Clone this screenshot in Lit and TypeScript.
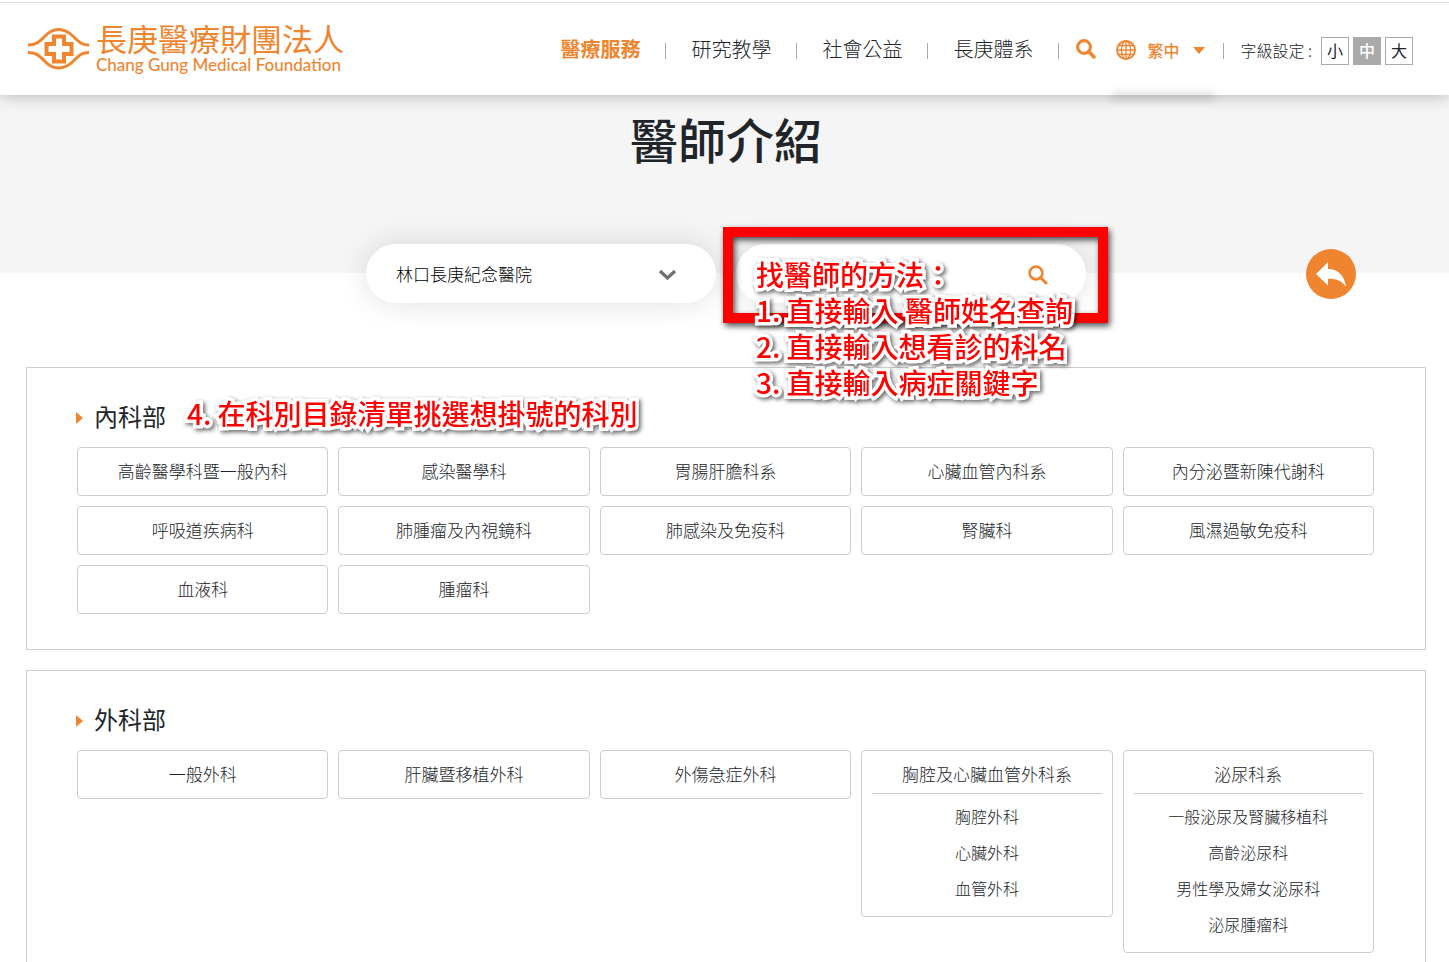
import { LitElement, html, css, svg } from "lit";
import { customElement, property, state } from "lit/decorators.js";
import { classMap } from "lit/directives/class-map.js";

interface Dept {
  name: string;
  children?: string[];
}

interface Division {
  title: string;
  depts: Dept[];
}

const NAV = ["醫療服務", "研究教學", "社會公益", "長庚體系"];
const SIZES = ["小", "中", "大"];

const DIVISIONS: Division[] = [
  {
    title: "內科部",
    depts: [
      { name: "高齡醫學科暨一般內科" },
      { name: "感染醫學科" },
      { name: "胃腸肝膽科系" },
      { name: "心臟血管內科系" },
      { name: "內分泌暨新陳代謝科" },
      { name: "呼吸道疾病科" },
      { name: "肺腫瘤及內視鏡科" },
      { name: "肺感染及免疫科" },
      { name: "腎臟科" },
      { name: "風濕過敏免疫科" },
      { name: "血液科" },
      { name: "腫瘤科" },
    ],
  },
  {
    title: "外科部",
    depts: [
      { name: "一般外科" },
      { name: "肝臟暨移植外科" },
      { name: "外傷急症外科" },
      { name: "胸腔及心臟血管外科系", children: ["胸腔外科", "心臟外科", "血管外科"] },
      {
        name: "泌尿科系",
        children: ["一般泌尿及腎臟移植科", "高齡泌尿科", "男性學及婦女泌尿科", "泌尿腫瘤科"],
      },
    ],
  },
];

const magnifier = (stroke: number) => svg`
  <circle cx="8" cy="8" r="6.4" fill="none" stroke="currentColor" stroke-width=${stroke}></circle>
  <path d="M12.6 12.6 L18 18" fill="none" stroke="currentColor" stroke-width=${stroke + 0.4} stroke-linecap="round"></path>`;

@customElement("site-header")
class SiteHeader extends LitElement {
  @state() private size = "中";

  static styles = css`
    :host {
      display: block;
      position: relative;
      z-index: 1;
      padding-top: 2px;
      background: #fff;
      box-shadow: 0 0 16px rgba(0, 0, 0, 0.3);
    }
    .bar {
      display: flex;
      align-items: center;
      justify-content: space-between;
      height: 93px;
      padding: 0 36px 0 28px;
      box-sizing: border-box;
      border-top: 1px solid #ddd;
    }
    a {
      color: inherit;
      text-decoration: none;
    }
    .logo {
      display: flex;
      align-items: center;
      gap: 6px;
      color: #f08530;
    }
    .mark {
      width: 62px;
      height: 42px;
    }
    .names {
      display: flex;
      flex-direction: column;
      gap: 2px;
    }
    .zh {
      font-size: 31px;
      line-height: 30px;
      font-weight: 400;
    }
    .en {
      font-family: Lato, sans-serif;
      font-size: 17px;
      line-height: 20px;
      font-weight: 500;
    }
    .tools {
      padding-top: 4px;
    }
    .tools,
    .nav,
    .sizes,
    .lang {
      display: flex;
      align-items: center;
    }
    .item {
      display: flex;
      align-items: center;
      font-size: 20px;
      line-height: 28px;
      font-weight: 300;
      color: #212529;
    }
    .item a {
      padding: 0 25px;
      margin-bottom: 4px;
    }
    .item.on {
      color: #f08530;
      font-weight: 700;
    }
    .item::after,
    .rule {
      content: "";
      width: 1px;
      height: 16px;
      background: #aaa;
    }
    button {
      font: inherit;
      color: #f08530;
      background: none;
      border: 0;
      padding: 0;
      cursor: pointer;
    }
    .find {
      margin: 0 20px 4px 17px;
      display: flex;
    }
    .lang {
      position: relative;
      gap: 11px;
      margin: 0 18px 2px 0;
      font-size: 16px;
      line-height: 24px;
      font-weight: 500;
    }
    .lang::after {
      content: "";
      position: absolute;
      left: 0;
      right: -6px;
      bottom: -34px;
      box-shadow: 0 0 8px 4px rgba(0, 0, 0, 0.12);
    }
    .caret {
      margin-left: 3px;
      border: 6px solid transparent;
      border-top: 7px solid #f08530;
      border-bottom: 0;
    }
    .sizes {
      gap: 4px;
      margin-left: 16px;
      font-size: 16px;
      line-height: 24px;
      font-weight: 300;
      color: #212529;
    }
    .label {
      margin: 0 5px 2px 0;
    }
    .size {
      width: 28px;
      height: 28px;
      padding-bottom: 2px;
      border: 1px solid #aaa;
      color: #212529;
      font-weight: 400;
    }
    .size.on {
      background: #aaa;
      color: #fff;
      font-weight: 500;
    }
  `;

  render() {
    return html`
      <header class="bar">
        <a class="logo" href="#">
          <svg class="mark" viewBox="0 0 62 42" aria-hidden="true">
            <g fill="none" stroke="#f08530" stroke-width="3">
              <path d="M0 17 C9 17 12 13 16 9 C25 -1 36 -1 46 9 C50 13 53 17 61 17"></path>
              <path d="M0 24.500 C9 24.500 12 28.500 16 32.500 C25 42.500 36 42.500 46 32.500 C50 28.500 53 24.500 61 24.500"></path>
            </g>
            <path
              fill="none"
              stroke="#f08530"
              stroke-width="4"
              d="M26 8.500 H36 V16 H43.500 V26 H36 V33.500 H26 V26 H18.500 V16 H26 Z"
            ></path>
          </svg>
          <span class="names">
            <span class="zh">長庚醫療財團法人</span>
            <span class="en">Chang Gung Medical Foundation</span>
          </span>
        </a>
        <div class="tools">
          <nav class="nav">
            ${NAV.map(
              (n, i) => html`<span class=${classMap({ item: true, on: i === 0 })}><a href="#">${n}</a></span>`
            )}
          </nav>
          <button class="find" aria-label="搜尋">
            <svg width="20" height="20" viewBox="0 0 20 20">${magnifier(3.1)}</svg>
          </button>
          <button class="lang">
            <svg width="20" height="20" viewBox="0 0 20 20" aria-hidden="true">
              <g fill="none" stroke="#f08530" stroke-width="1.300">
                <circle cx="10" cy="10" r="9" stroke-width="1.900"></circle>
                <ellipse cx="10" cy="10" rx="4.600" ry="9"></ellipse>
                <path d="M10 1 V19 M1 10 H19 M2.500 5.500 H17.500 M2.500 14.500 H17.500"></path>
              </g>
            </svg>
            繁中
            <span class="caret"></span>
          </button>
          <span class="rule"></span>
          <div class="sizes" role="group" aria-label="字級設定">
            <span class="label">字級設定 :</span>
            ${SIZES.map(
              (s) => html`<button
                class=${classMap({ size: true, on: s === this.size })}
                @click=${() => (this.size = s)}
              >
                ${s}
              </button>`
            )}
          </div>
        </div>
      </header>
    `;
  }
}

@customElement("dept-panel")
class DeptPanel extends LitElement {
  @property({ attribute: false }) division!: Division;

  static styles = css`
    :host {
      display: block;
      position: relative;
      padding: 33px 51px 35px 50px;
      border: 1px solid #ccc;
      color: #212529;
    }
    h2 {
      display: flex;
      align-items: center;
      gap: 11px;
      margin: 0 0 16px;
      font-size: 24px;
      line-height: 30px;
      font-weight: 400;
    }
    h2::before {
      content: "";
      margin: 4px 0 0 -1px;
      border: 6px solid transparent;
      border-left: 7px solid #f08530;
      border-right: 0;
    }
    .grid {
      display: grid;
      grid-template-columns: repeat(5, 1fr);
      align-items: start;
      gap: 10px;
    }
    .card {
      border: 1px solid #ccc;
      border-radius: 4px;
      text-align: center;
      font-weight: 300;
    }
    a {
      display: block;
      color: inherit;
      text-decoration: none;
    }
    .main {
      padding: 11px 0 13px;
      font-size: 17px;
      line-height: 23px;
    }
    .group {
      padding: 0 10px 10px;
    }
    .group .main {
      padding-bottom: 8px;
      margin-bottom: 4px;
      border-bottom: 1px solid #ccc;
    }
    .sub {
      font-size: 16px;
      line-height: 36px;
    }
  `;

  render() {
    return html`
      <h2>${this.division.title}</h2>
      <div class="grid">
        ${this.division.depts.map(
          (d) => html`<div class=${classMap({ card: true, group: !!d.children })}>
            <a class="main" href="#">${d.name}</a>
            ${d.children?.map((c) => html`<a class="sub" href="#">${c}</a>`)}
          </div>`
        )}
      </div>
      <slot></slot>
    `;
  }
}

@customElement("app-root")
class AppRoot extends LitElement {
  static styles = css`
    :host {
      display: block;
      height: 100vh;
      overflow: hidden;
      background: #fff;
      font-family: "Noto Sans CJK TC", "Noto Sans", sans-serif;
      color: #212529;
    }
    .hero {
      padding: 11px 0 103px;
      background: #f5f5f5;
      text-align: center;
    }
    h1 {
      margin: 0;
      padding-left: 3px;
      font-size: 48px;
      line-height: 64px;
      font-weight: 500;
    }
    main {
      padding: 0 23px 0 26px;
    }
    .controls {
      display: grid;
      grid-template-columns: 1fr auto 1fr;
      align-items: center;
      margin-top: -29px;
    }
    .pills {
      grid-column: 2;
      display: flex;
      gap: 20px;
    }
    .pill {
      position: relative;
      display: flex;
      align-items: center;
      width: 350px;
      height: 59px;
      border-radius: 30px;
      background: #fff;
      box-shadow: 0 0 30px rgba(0, 0, 0, 0.13);
    }
    select,
    input {
      flex: 1;
      min-width: 0;
      height: 59px;
      padding: 0 30px;
      border: 0;
      outline: 0;
      background: none;
      appearance: none;
      font: inherit;
      font-size: 17px;
      font-weight: 300;
      color: #000;
    }
    .chevron {
      position: absolute;
      right: 38px;
      pointer-events: none;
    }
    button {
      display: flex;
      padding: 0;
      border: 0;
      background: none;
      color: #f08530;
      cursor: pointer;
    }
    .go {
      margin: 3px 38px 0 0;
    }
    .back {
      position: relative;
      justify-self: end;
      margin-right: 70px;
      border-radius: 50%;
    }
    .panels {
      display: grid;
      gap: 20px;
      margin-top: 64px;
    }
    .frame {
      position: absolute;
      z-index: 2;
      left: -13px;
      top: -17px;
      width: 385px;
      height: 96px;
      box-sizing: border-box;
      border: 10px solid #f00;
      filter: drop-shadow(2px 3px 3px rgba(0, 0, 0, 0.7));
      pointer-events: none;
    }
    .note {
      position: absolute;
      z-index: 3;
      margin: 0;
      padding: 0;
      white-space: nowrap;
      font-size: 28px;
      line-height: 36px;
      font-weight: 500;
      color: #f00;
      -webkit-text-stroke: 7px #fff;
      paint-order: stroke fill;
      stroke-linejoin: round;
      filter: drop-shadow(2px 2px 2px rgba(0, 0, 0, 0.6));
      pointer-events: none;
    }
    .tips {
      left: 20px;
      top: 12px;
    }
    .fourth {
      left: 160px;
      top: 27px;
    }
  `;

  render() {
    return html`
      <site-header></site-header>
      <div class="hero"><h1>醫師介紹</h1></div>
      <main>
        <div class="controls">
          <div class="pills">
            <div class="pill">
              <select aria-label="院區">
                <option>林口長庚紀念醫院</option>
              </select>
              <svg class="chevron" width="20" height="12" viewBox="0 0 20 12" aria-hidden="true">
                <path d="M2 3 L9.500 10 L17 3" fill="none" stroke="#707070" stroke-width="3.200"></path>
              </svg>
            </div>
            <div class="pill">
              <input type="text" aria-label="搜尋醫師" />
              <button class="go" aria-label="搜尋">
                <svg width="20" height="20" viewBox="0 0 20 20">${magnifier(2.6)}</svg>
              </button>
              <div class="frame"></div>
              <div class="note tips">
                <div>找醫師的方法：</div>
                <div>1. 直接輸入 醫師姓名查詢</div>
                <div>2. 直接輸入想看診的科名</div>
                <div>3. 直接輸入病症關鍵字</div>
              </div>
            </div>
          </div>
          <button class="back" aria-label="返回">
            <svg width="50" height="50" viewBox="0 0 50 50">
              <circle cx="25" cy="25" r="25" fill="#f08530"></circle>
              <path d="M10 25 L22 13 V20 C32 20 38.500 27 40 37.500 C35 31.500 30 29.500 22 29.800 V36.500 Z" fill="#fff"></path>
            </svg>
          </button>
        </div>
        <div class="panels">
          <dept-panel .division=${DIVISIONS[0]}>
            <div class="note fourth">4. 在科別目錄清單挑選想掛號的科別</div>
          </dept-panel>
          <dept-panel .division=${DIVISIONS[1]}></dept-panel>
        </div>
      </main>
    `;
  }
}
